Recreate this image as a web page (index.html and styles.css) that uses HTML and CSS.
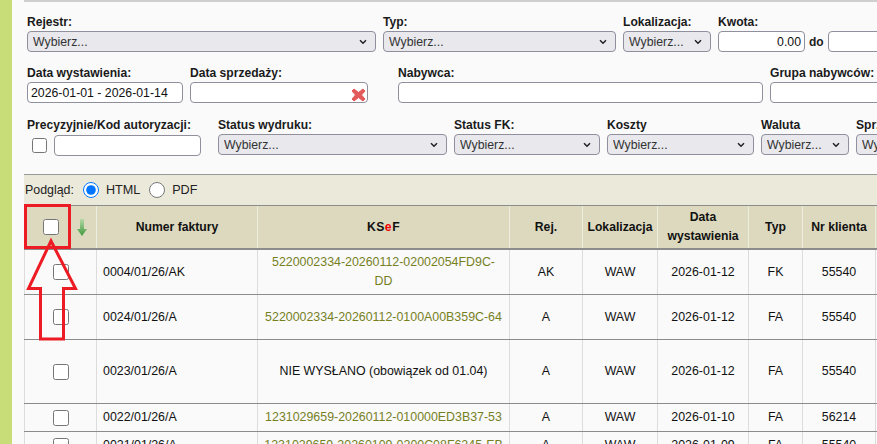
FILE: index.html
```html
<!DOCTYPE html>
<html lang="pl">
<head>
<meta charset="utf-8">
<title>Faktury</title>
<link rel="stylesheet" href="styles.css">
</head>
<body>
<main class="page">
  <form class="filters">
    <div class="row row-1">
      <div class="field w-349"><label>Rejestr:</label><select><option>Wybierz...</option></select></div>
      <div class="field w-233"><label>Typ:</label><select><option>Wybierz...</option></select></div>
      <div class="field w-88"><label>Lokalizacja:</label><select><option>Wybierz...</option></select></div>
      <div class="field"><label>Kwota:</label>
        <div class="amount"><input class="num" type="text" value="0.00"><b>do</b><input class="num" type="text"></div>
      </div>
    </div>
    <div class="row row-2">
      <div class="field w-156"><label>Data wystawienia:</label><input type="text" value="2026-01-01 - 2026-01-14"></div>
      <div class="field w-178"><label>Data sprzedaży:</label>
        <div class="clearable"><input type="text">
          <svg class="clear" viewBox="0 0 15 14" width="15" height="14"><path d="M1 3 3 1 7.5 4.5 12 1 14 3 10.5 7 14 11 12 13 7.5 9.5 3 13 1 11 4.5 7Z" fill="#e25a5a" stroke="#e25a5a" stroke-linejoin="round"/></svg>
        </div>
      </div>
      <div class="field w-365 push"><label>Nabywca:</label><input type="text"></div>
      <div class="field w-200"><label>Grupa nabywców:</label><input type="text"></div>
    </div>
    <div class="row row-3">
      <div class="field w-174"><label>Precyzyjnie/Kod autoryzacji:</label>
        <div class="precise"><input class="check-s" type="checkbox"><input type="text"></div>
      </div>
      <div class="field w-229 push-s"><label>Status wydruku:</label><select><option>Wybierz...</option></select></div>
      <div class="field w-146"><label>Status FK:</label><select><option>Wybierz...</option></select></div>
      <div class="field w-147"><label>Koszty</label><select><option>Wybierz...</option></select></div>
      <div class="field w-88"><label>Waluta</label><select><option>Wybierz...</option></select></div>
      <div class="field w-88"><label>Sprzedawca:</label><select><option>Wybierz...</option></select></div>
    </div>
  </form>

  <div class="preview">
    <span class="preview-label">Podgląd:</span>
    <input class="radio" type="radio" name="podglad" checked><span class="opt">HTML</span>
    <input class="radio" type="radio" name="podglad"><span class="opt">PDF</span>
  </div>

  <table class="invoices">
    <colgroup>
      <col class="c1"><col class="c2"><col class="c3"><col class="c4"><col class="c5"><col class="c6"><col class="c7"><col class="c8"><col class="c9">
    </colgroup>
    <thead>
      <tr>
        <th>
          <div class="head-check">
            <input class="check" type="checkbox">
            <svg viewBox="0 0 10 17" width="10" height="17"><defs><linearGradient id="g" x1="0" y1="0" x2="0" y2="1"><stop offset="0" stop-color="#b4d8a4"/><stop offset="1" stop-color="#3f9a3f"/></linearGradient></defs><path d="M3 0H7V10H10L5 17 0 10H3Z" fill="url(#g)"/></svg>
          </div>
        </th>
        <th>Numer faktury</th>
        <th class="ksef">KS<span class="red">e</span>F</th>
        <th>Rej.</th>
        <th>Lokalizacja</th>
        <th>Data<br>wystawienia</th>
        <th>Typ</th>
        <th>Nr klienta</th>
        <th></th>
      </tr>
    </thead>
    <tbody>
      <tr class="r-44">
        <td><input class="check" type="checkbox"></td><td class="nr">0004/01/26/AK</td>
        <td class="green">5220002334-20260112-02002054FD9C-DD</td><td>AK</td><td>WAW</td><td>2026-01-12</td><td>FK</td><td>55540</td><td></td>
      </tr>
      <tr class="r-45">
        <td><input class="check" type="checkbox"></td><td class="nr">0024/01/26/A</td>
        <td class="green">5220002334-20260112-0100A00B359C-64</td><td>A</td><td>WAW</td><td>2026-01-12</td><td>FA</td><td>55540</td><td></td>
      </tr>
      <tr class="r-64">
        <td><input class="check" type="checkbox"></td><td class="nr">0023/01/26/A</td>
        <td>NIE WYSŁANO (obowiązek od 01.04)</td><td>A</td><td>WAW</td><td>2026-01-12</td><td>FA</td><td>55540</td><td></td>
      </tr>
      <tr class="r-28">
        <td><input class="check" type="checkbox"></td><td class="nr">0022/01/26/A</td>
        <td class="green">1231029659-20260112-010000ED3B37-53</td><td>A</td><td>WAW</td><td>2026-01-10</td><td>FA</td><td>56214</td><td></td>
      </tr>
      <tr class="r-28">
        <td><input class="check" type="checkbox"></td><td class="nr">0021/01/26/A</td>
        <td class="green">1231029659-20260109-0200C08F6245-EB</td><td>A</td><td>WAW</td><td>2026-01-09</td><td>FA</td><td>55540</td><td></td>
      </tr>
    </tbody>
  </table>

  <svg class="annotation" width="80" height="140" viewBox="0 0 80 140">
    <rect x="1.5" y="1.5" width="44" height="42" fill="none" stroke="#ed1c24" stroke-width="3"/>
    <path d="M27 37 4.5 84.5H16.5V135H39.5V84.5H51.5Z" fill="none" stroke="#ed1c24" stroke-width="3"/>
  </svg>
</main>
</body>
</html>
```
FILE: styles.css
```css
html, body {
  margin: 0;
  height: 100%;
  overflow: hidden;
}

body {
  background: #fafafa;
  border-left: 12px solid #c8dc78;
  font-family: "Liberation Sans", Arial, sans-serif;
  font-size: 12px;
  color: #111;
}

.page {
  position: relative;
  margin-left: 12px;
  width: 1000px;
}

.filters {
  border-top: 2px solid #cfcfcf;
  padding: 13px 0 0 3px;
  height: 174px;
  box-sizing: border-box;
}

.row {
  display: flex;
  gap: 7px;
  align-items: flex-start;
}

.row-2 { margin-top: 14px; }
.row-3 { margin-top: 15px; }

.field {
  display: flex;
  flex-direction: column;
  gap: 2px;
  flex: none;
}

.field label {
  font-weight: bold;
  font-size: 12.1px;
  line-height: 14px;
  white-space: nowrap;
  color: #1a1a1a;
}

.w-88 { width: 88px; }
.w-146 { width: 146px; }
.w-147 { width: 147px; }
.w-156 { width: 156px; }
.w-174 { width: 174px; }
.w-178 { width: 178px; }
.w-200 { width: 200px; }
.w-229 { width: 229px; }
.w-233 { width: 233px; }
.w-349 { width: 349px; }
.w-365 { width: 365px; }
.push { margin-left: 23px; }
.push-s { margin-left: 10px; }

select,
input[type="text"] {
  box-sizing: border-box;
  height: 21px;
  width: 100%;
  margin: 0;
  border: 1px solid #8f8f9d;
  border-radius: 4px;
  font-family: "Liberation Sans", Arial, sans-serif;
  font-size: 12.3px;
}

select {
  appearance: none;
  background: #e8e8ed url("data:image/svg+xml,%3Csvg xmlns='http://www.w3.org/2000/svg' width='8' height='6'%3E%3Cpath d='M1 1.2 4 4.2 7 1.2' fill='none' stroke='%23222' stroke-width='1.5'/%3E%3C/svg%3E") no-repeat right 8px center;
  padding: 0 18px 0 5px;
  color: #333;
}

input[type="text"] {
  background: #fff;
  padding: 1px 3px;
  color: #111;
}

.amount {
  display: flex;
  align-items: center;
  gap: 4px;
}

.amount b { color: #222; }

.amount .num {
  width: 87px;
  text-align: right;
}

.amount .num:last-child { width: 100px; }

.clearable { position: relative; }

.clear {
  position: absolute;
  right: 2px;
  top: 6px;
}

.precise {
  display: flex;
  align-items: center;
  gap: 7px;
  margin-top: 1px;
  padding-left: 5px;
}

.precise input[type="text"] { width: 147px; }

.check-s {
  width: 15px;
  height: 15px;
  margin: 0;
  flex: none;
}

.check {
  width: 16px;
  height: 16px;
  margin: 0;
  flex: none;
}

.preview {
  display: flex;
  align-items: center;
  height: 31px;
  box-sizing: border-box;
  padding-left: 1px;
  background: #ebe9da;
  border-top: 1px solid #999;
  color: #222;
}

.preview-label { font-size: 12.4px; }

.radio {
  width: 16px;
  height: 16px;
  margin: 0 0 0 9px;
}

.opt {
  margin-left: 7px;
  font-size: 12.6px;
}

.invoices {
  table-layout: fixed;
  border-collapse: collapse;
  width: 976px;
  font-size: 12.4px;
}

.c1 { width: 72px; }
.c2 { width: 161px; }
.c3 { width: 252px; }
.c4 { width: 73px; }
.c5 { width: 75px; }
.c6 { width: 91px; }
.c7 { width: 54px; }
.c8 { width: 73px; }
.c9 { width: 125px; }

.invoices th {
  height: 42px;
  padding: 0 4px;
  background: #dcd9be;
  border-top: 1px solid #8c8c8c;
  border-bottom: 2px solid #8c8c8c;
  border-left: 1px solid #ececdf;
  font-weight: bold;
  font-size: 12.2px;
  line-height: 19px;
  color: #111;
}

.invoices td {
  padding: 0 6px;
  border-bottom: 1px solid #8c8c8c;
  border-left: 1px solid #dcdcdc;
  text-align: center;
  line-height: 19px;
}

.invoices tr > :first-child {
  border-left: 1px solid #dcdcdc;
}

.invoices td .check { display: block; margin: 0 auto; }

.head-check {
  display: flex;
  align-items: center;
  gap: 18px;
  padding-left: 14px;
}

.invoices .nr { text-align: left; }

.green { color: #77801f; }
.red { color: #f00000; }
.ksef { letter-spacing: 0.5px; }

.r-44 td { height: 44px; }
.r-45 td { height: 44px; }
.r-64 td { height: 63px; }
.r-28 td { height: 27px; }

.annotation {
  position: absolute;
  left: 0;
  top: 204px;
  pointer-events: none;
}
```
